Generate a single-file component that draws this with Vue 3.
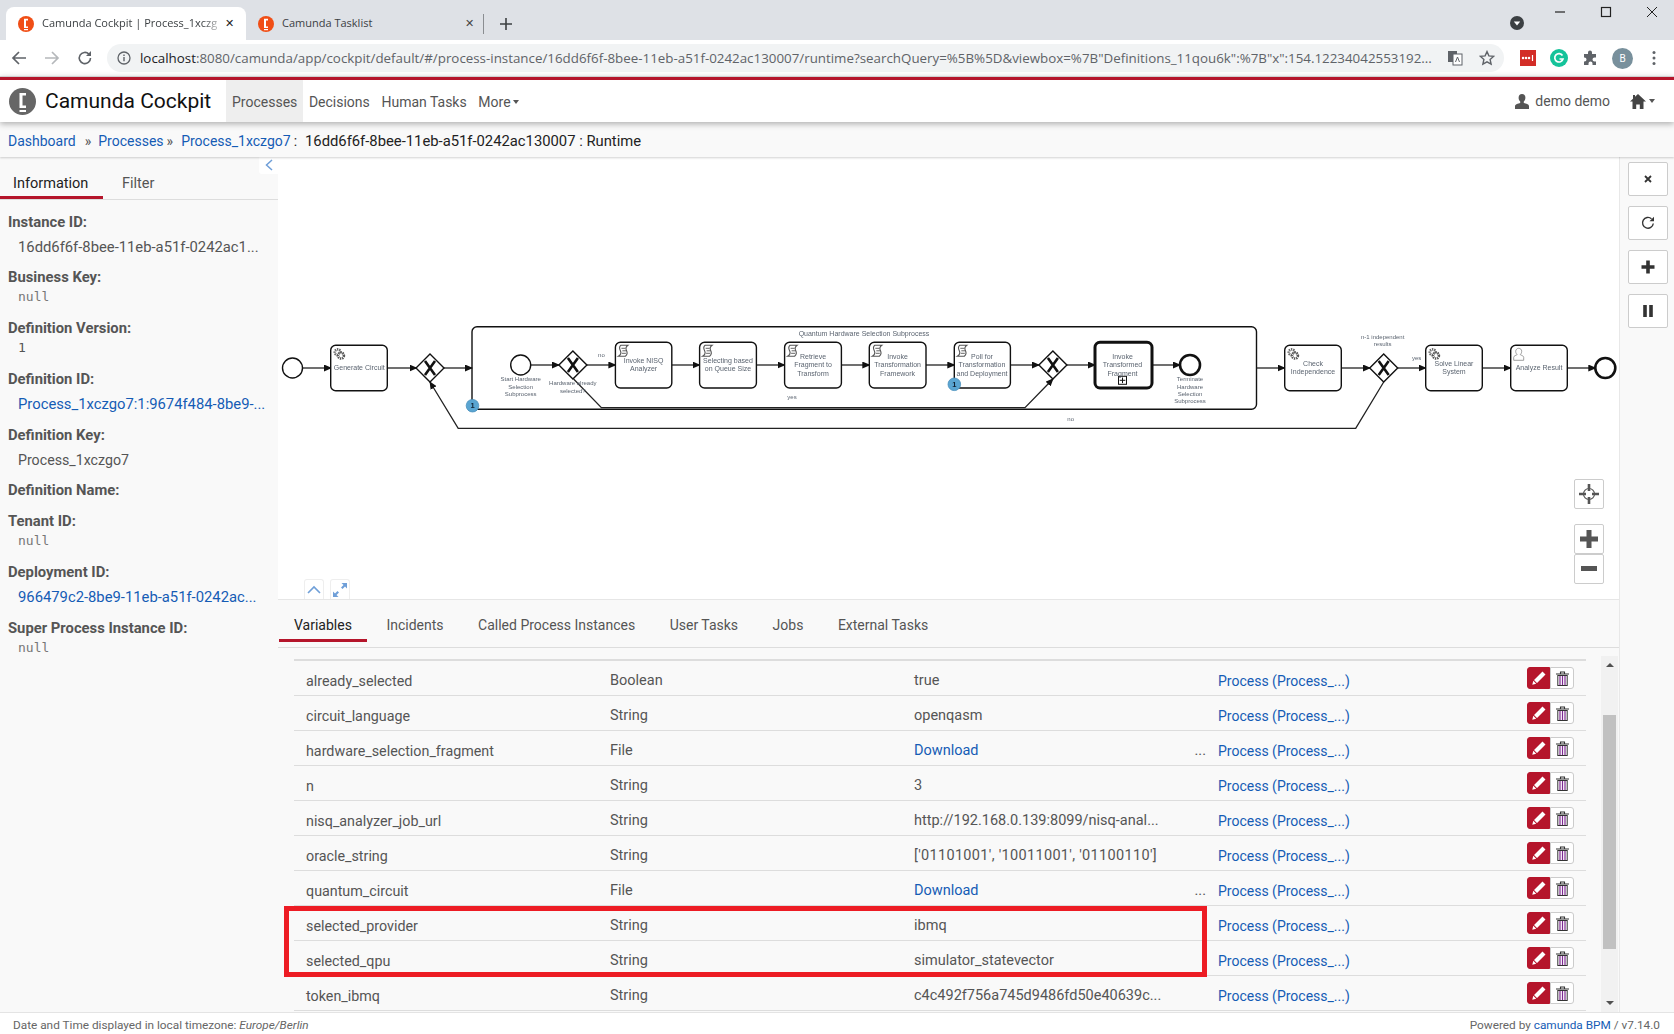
<template>
  <div class="page">
    <!-- browser chrome -->
    <div class="tabstrip">
      <div class="tab tab-active">
        <svg class="favicon" width="16" height="16" viewBox="0 0 16 16"><circle cx="8" cy="8" r="8" fill="#f04e16"/><path d="M6 2.800h4v1.600H8v6h2V12H6z" fill="#fff"/><rect x="6" y="13" width="4" height="1.200" fill="#fff"/></svg>
        <span class="tab-title fade">Camunda Cockpit | Process_1xczg</span>
        <span class="tab-close">✕</span>
      </div>
      <div class="tab">
        <svg class="favicon" width="16" height="16" viewBox="0 0 16 16"><circle cx="8" cy="8" r="8" fill="#f04e16"/><path d="M6 2.800h4v1.600H8v6h2V12H6z" fill="#fff"/><rect x="6" y="13" width="4" height="1.200" fill="#fff"/></svg>
        <span class="tab-title">Camunda Tasklist</span>
        <span class="tab-close dim">✕</span>
      </div>
      <span class="tab-sep"></span>
      <svg class="new-tab" width="12" height="12" viewBox="0 0 12 12"><path d="M6 0v12M0 6h12" stroke="#3c4043" stroke-width="1.6"/></svg>
      <span class="spacer"></span>
      <svg class="tab-search" width="14" height="14" viewBox="0 0 14 14"><circle cx="7" cy="7" r="7" fill="#3c4043"/><path d="M3.800 5.400h6.400L7 9.600z" fill="#fff"/></svg>
      <div class="win-controls">
        <svg width="12" height="12" viewBox="0 0 12 12"><path d="M1 6h10" stroke="#222" stroke-width="1.2"/></svg>
        <svg width="12" height="12" viewBox="0 0 12 12"><rect x="1.500" y="1.500" width="9" height="9" fill="none" stroke="#222" stroke-width="1.2"/></svg>
        <svg width="12" height="12" viewBox="0 0 12 12"><path d="M1 1l10 10M11 1L1 11" stroke="#222"/></svg>
      </div>
    </div>
    <div class="toolbar">
      <svg width="16" height="16" viewBox="0 0 16 16"><path d="M15 8H2M8 2L2 8l6 6" fill="none" stroke="#5f6368" stroke-width="1.7"/></svg>
      <svg width="16" height="16" viewBox="0 0 16 16"><path d="M1 8h13M8 2l6 6-6 6" fill="none" stroke="#b5b8bb" stroke-width="1.7"/></svg>
      <svg width="16" height="16" viewBox="0 0 16 16"><path d="M13.500 8a5.600 5.600 0 1 1-1.600-3.900" fill="none" stroke="#5f6368" stroke-width="1.6"/><path d="M14 1v5H9z" fill="#5f6368"/></svg>
      <div class="omnibox">
        <svg width="14" height="14" viewBox="0 0 14 14"><circle cx="7" cy="7" r="6" fill="none" stroke="#5f6368" stroke-width="1.3"/><path d="M7 6v4.200M7 3.400v1.500" stroke="#5f6368" stroke-width="1.4"/></svg>
        <span class="url"><b>localhost</b>:8080/camunda/app/cockpit/default/#/process-instance/16dd6f6f-8bee-11eb-a51f-0242ac130007/runtime?searchQuery=%5B%5D&amp;viewbox=%7B"Definitions_11qou6k":%7B"x":154.12234042553192...</span>
        <svg width="16" height="16" viewBox="0 0 16 16"><rect x="1" y="1" width="9" height="11" fill="#5f6368"/><rect x="6" y="4" width="9" height="11" fill="#fff" stroke="#5f6368"/><path d="M8.500 12l2-5 2 5" fill="none" stroke="#5f6368"/></svg>
        <svg class="star" width="16" height="16" viewBox="0 0 16 16"><path d="M8 1.600l1.900 4.300 4.700.5-3.500 3.100 1 4.600L8 11.800 3.900 14.100l1-4.600L1.400 6.400l4.700-.5z" fill="none" stroke="#5f6368" stroke-width="1.4"/></svg>
      </div>
      <div class="extensions">
        <svg width="16" height="16" viewBox="0 0 16 16"><rect width="16" height="16" fill="#d32d27"/><path d="M3 8h.1M6 8h.1M9 8h.1" stroke="#fff" stroke-width="2.4" stroke-linecap="round"/><path d="M12.500 5v6" stroke="#fff" stroke-width="1.2"/></svg>
        <svg width="18" height="18" viewBox="0 0 18 18"><circle cx="9" cy="9" r="9" fill="#15c39a"/><path d="M12.500 6.500A4.200 4.200 0 1 0 13 10H9.500" fill="none" stroke="#fff" stroke-width="1.7"/></svg>
        <svg width="16" height="16" viewBox="0 0 16 16"><path d="M6 2.500a2 2 0 0 1 4 0V4h4v3.500h-1.500a2 2 0 0 0 0 4H14V15h-3.500v-1.500a2 2 0 0 0-4 0V15H2v-3.500H2.500a2 2 0 0 0 0-4H2V4h4z" fill="#5f6368"/></svg>
        <span class="avatar">B</span>
        <svg width="4" height="16" viewBox="0 0 4 16"><circle cx="2" cy="2.500" r="1.500" fill="#5f6368"/><circle cx="2" cy="8" r="1.500" fill="#5f6368"/><circle cx="2" cy="13.500" r="1.500" fill="#5f6368"/></svg>
      </div>
    </div>

    <!-- camunda header -->
    <header class="navbar">
      <svg class="logo" width="27" height="27" viewBox="0 0 27 27"><circle cx="13.500" cy="13.500" r="13.500" fill="#666"/><path d="M10.500 5h6.500v2.500h-3.500v10H17V20h-6.500z" fill="#fff"/><rect x="10.500" y="22" width="6.500" height="2" fill="#fff"/></svg>
      <span class="brand">Camunda Cockpit</span>
      <nav class="nav">
        <a class="nav-item active">Processes</a>
        <a class="nav-item">Decisions</a>
        <a class="nav-item">Human Tasks</a>
        <a class="nav-item">More<i class="caret"></i></a>
      </nav>
      <span class="spacer"></span>
      <svg width="14" height="15" viewBox="0 0 14 15"><path d="M7 0c2.200 0 3.400 1.700 3.400 3.800 0 1.600-.7 3-1.600 3.800v1.300c2 .6 5.200 1.200 5.200 3.100v3H0v-3c0-1.900 3.200-2.500 5.200-3.100V7.600C4.300 6.800 3.600 5.400 3.600 3.800 3.600 1.700 4.800 0 7 0z" fill="#555"/></svg>
      <span class="user">demo demo</span>
      <svg class="home" width="16" height="15" viewBox="0 0 16 15"><path d="M8 0l8 7.500h-2.500V15H9.800v-4.500H6.200V15H2.500V7.500H0L3 4.700V1h2v1.800z" fill="#444"/></svg>
      <i class="caret home-caret"></i>
    </header>

    <div class="breadcrumb">
      <a>Dashboard</a><span class="sep">»</span><a>Processes</a><span class="sep2">»</span><a>Process_1xczgo7</a><span class="colon">:</span><span class="crumb-id">16dd6f6f-8bee-11eb-a51f-0242ac130007 : Runtime</span>
    </div>

    <div class="body">
      <aside class="sidebar">
        <button class="collapse-side">
          <svg width="10" height="12" viewBox="0 0 10 12"><path d="M8 1L2.500 6 8 11" fill="none" stroke="#6f9fd8" stroke-width="1.5"/></svg>
        </button>
        <div class="side-tabs">
          <span class="side-tab current">Information</span>
          <span class="side-tab">Filter</span>
        </div>
        <dl class="info">
          <div v-for="item in info" :key="item.label" class="info-item">
            <dt>{{ item.label }}</dt>
            <dd v-if="item.kind" :class="item.kind">{{ item.value }}</dd>
          </div>
        </dl>
      </aside>

      <main class="main">
        <section class="diagram">
          <svg class="bpmn" width="1341" height="443" viewBox="278 157 1341 443">
            <defs>
              <marker id="arr" markerWidth="8" markerHeight="7" refX="7" refY="3.5" orient="auto" markerUnits="userSpaceOnUse">
                <path d="M0 0l8 3.500L0 7z" fill="#111"/>
              </marker>
              <g id="gear">
                <circle cx="4.500" cy="4.500" r="2.900" fill="#fff" stroke="#666" stroke-width="2.600" stroke-dasharray="1.300 .8"/>
                <circle cx="7.800" cy="7.800" r="2.900" fill="#fff" stroke="#555" stroke-width="2.600" stroke-dasharray="1.300 .8"/>
              </g>
              <g id="script">
                <path d="M3 .5h7C8 2 7.500 3.500 8.500 5.500S10 9.500 7.500 11.500h-7C3 10 3.500 8 2.500 6S1 2 3 .5z" fill="#fff" stroke="#555" stroke-width="1.1"/>
                <path d="M3.500 3.500h4M4.500 6h4M4 8.500h4" stroke="#555" stroke-width=".9"/>
              </g>
              <g id="person">
                <path d="M.5 12.500V9.500c0-1.500 2.500-2 3.500-2.700-1-.8-1.500-2-1.500-3.300C2.500 1.800 3.800.5 5.500.5s3 1.300 3 3c0 1.300-.5 2.500-1.500 3.300 1 .7 3.500 1.200 3.500 2.700v3z" fill="#fff" stroke="#888" stroke-width=".8"/>
              </g>
            </defs>
            <!-- subprocess -->
            <rect x="472" y="326.7" width="784.5" height="82.6" rx="5" class="shape"/>
            <!-- sequence flows -->
            <path v-for="f in flows" :key="f" :d="f" class="flow" marker-end="url(#arr)"/>
            <path d="M1383.700 382L1355.700 428.300H458.200L430 382" class="flow" marker-end="url(#arr)"/>
            <path d="M573.600 379L601.400 407.700H1025L1052.900 379" class="flow" marker-end="url(#arr)"/>
            <!-- events -->
            <circle cx="292.5" cy="368" r="10" class="shape"/>
            <circle cx="520.7" cy="365" r="10" class="shape"/>
            <circle cx="1190" cy="365" r="10" class="shape end"/>
            <circle cx="1605.3" cy="368" r="10" class="shape end"/>
            <!-- gateways -->
            <g v-for="g in gateways" :key="g[0]" :transform="`translate(${g[0]} ${g[1]})`">
              <path d="M0-14L14 0 0 14-14 0z" class="shape"/>
              <path d="M-5-7L5 7M5-7L-5 7" stroke="#111" stroke-width="2.600"/>
            </g>
            <!-- tasks -->
            <g v-for="t in tasks" :key="t.x">
              <rect :x="t.x" :y="t.y" :width="t.w" :height="t.h" rx="5" :class="['shape', { thick: t.thick }]"/>
              <use v-if="t.icon" :href="`#${t.icon}`" :x="t.x + 2.5" :y="t.y + 2.5"/>
            </g>
            <rect x="1118.5" y="376.3" width="8" height="8" fill="#fff" stroke="#111"/>
            <path d="M1122.500 377.500v5.600M1119.700 380.300h5.600" stroke="#111"/>
            <!-- multi instance badges -->
            <g v-for="b in badges" :key="b[0]">
              <circle :cx="b[0]" :cy="b[1]" r="6.3" fill="#5aa5d2" stroke="#4a90bd" stroke-width=".8"/>
              <text :x="b[0]" :y="b[1] + 2.5" class="badge">1</text>
            </g>
            <!-- labels -->
            <text v-for="l in labels" :key="l.t + l.x + l.y" :x="l.x" :y="l.y" :class="['lbl', { small: l.s }]">{{ l.t }}</text>
          </svg>

          <div class="map-controls">
            <button class="map-btn">
              <svg width="20" height="20" viewBox="0 0 20 20"><circle cx="10" cy="10" r="5.500" fill="none" stroke="#555" stroke-width="1.2"/><path d="M10 0v7M10 13v7M0 10h7M13 10h7" stroke="#555" stroke-width="2.6"/></svg>
            </button>
            <div class="zoom-group">
              <button class="map-btn">
                <svg width="18" height="18" viewBox="0 0 18 18"><path d="M9 0v18M0 9h18" stroke="#555" stroke-width="5"/></svg>
              </button>
              <button class="map-btn">
                <svg width="16" height="6" viewBox="0 0 16 6"><rect width="16" height="5" fill="#555"/></svg>
              </button>
            </div>
          </div>

          <div class="pane-controls">
            <button class="pane-btn">
              <svg width="14" height="9" viewBox="0 0 14 9"><path d="M1 8l6-6 6 6" fill="none" stroke="#6f9fd8" stroke-width="1.6"/></svg>
            </button>
            <button class="pane-btn">
              <svg width="14" height="14" viewBox="0 0 14 14"><path d="M14 0H8.500l2 2L8 4.500 9.500 6 12 3.500l2 2zM0 14h5.500l-2-2L6 9.500 4.500 8 2 10.500l-2-2z" fill="#6f9fd8"/></svg>
            </button>
          </div>
        </section>

        <div class="tabs">
          <span v-for="(t, i) in tabs" :key="t" :class="['tab-link', { current: i === 0 }]">{{ t }}</span>
        </div>

        <div class="table-area">
          <div class="table">
            <div v-for="row in rows" :key="row.name" class="row">
              <span class="c-name">{{ row.name }}</span>
              <span>{{ row.type }}</span>
              <span :class="['c-value', { spread: row.spread }]">
                <a v-if="row.download" class="link">Download</a>
                <template v-else>{{ row.value }}</template>
                <span v-if="row.download" class="dots">...</span>
              </span>
              <a class="link c-scope">Process (Process_...)</a>
              <span class="actions">
                <button class="act edit">
                  <svg width="14" height="14" viewBox="0 0 14 14"><path d="M10.500 .5l3 3-8.500 8.500-3-3zM1.300 9.800l2.900 2.900-3.900 1z" fill="#fff"/></svg>
                </button>
                <button class="act trash">
                  <svg width="13" height="15" viewBox="0 0 13 15"><path d="M0 3h13M4.500 3V1h4v2" fill="none" stroke="#333" stroke-width="1.1"/><rect x="1.800" y="4.500" width="9.400" height="10" fill="#fff" stroke="#333"/><path d="M4 5v9M6.500 5v9M9 5v9" stroke="#7d2a91" stroke-width="1.2"/></svg>
                </button>
              </span>
            </div>
            <div class="highlight"></div>
          </div>
          <div class="scrollbar">
            <i class="arrow up"></i>
            <span class="track-a"></span>
            <span class="thumb"></span>
            <span class="track-b"></span>
            <i class="arrow down"></i>
          </div>
        </div>
      </main>

      <div class="rail">
        <button class="rail-btn">
          <svg width="8" height="8" viewBox="0 0 8 8"><path d="M1 1l6 6M7 1L1 7" stroke="#333" stroke-width="1.8"/></svg>
        </button>
        <button class="rail-btn">
          <svg width="14" height="14" viewBox="0 0 14 14"><path d="M12.300 7.500A5.400 5.400 0 1 1 10.500 2.700" fill="none" stroke="#333" stroke-width="1.4"/><path d="M13 .8v4.500H8.500z" fill="#333"/></svg>
        </button>
        <button class="rail-btn">
          <svg width="14" height="14" viewBox="0 0 14 14"><path d="M7 .5v13M.5 7h13" stroke="#333" stroke-width="3.6"/></svg>
        </button>
        <button class="rail-btn">
          <svg width="10" height="12" viewBox="0 0 10 12"><path d="M2 0v12M8 0v12" stroke="#333" stroke-width="3.6"/></svg>
        </button>
      </div>
    </div>

    <footer class="footer">
      <span>Date and Time displayed in local timezone: <em>Europe/Berlin</em></span>
      <span>Powered by <a class="link">camunda BPM</a> / v7.14.0</span>
    </footer>
  </div>
</template>

<script setup>
const info = [
  { label: 'Instance ID:', value: '16dd6f6f-8bee-11eb-a51f-0242ac1...', kind: 'text' },
  { label: 'Business Key:', value: 'null', kind: 'mono' },
  { label: 'Definition Version:', value: '1', kind: 'mono dark' },
  { label: 'Definition ID:', value: 'Process_1xczgo7:1:9674f484-8be9-...', kind: 'text blue' },
  { label: 'Definition Key:', value: 'Process_1xczgo7', kind: 'text plain' },
  { label: 'Definition Name:' },
  { label: 'Tenant ID:', value: 'null', kind: 'mono' },
  { label: 'Deployment ID:', value: '966479c2-8be9-11eb-a51f-0242ac...', kind: 'text blue' },
  { label: 'Super Process Instance ID:', value: 'null', kind: 'mono' }
]

const tabs = ['Variables', 'Incidents', 'Called Process Instances', 'User Tasks', 'Jobs', 'External Tasks']

const rows = [
  { name: 'already_selected', type: 'Boolean', value: 'true' },
  { name: 'circuit_language', type: 'String', value: 'openqasm' },
  { name: 'hardware_selection_fragment', type: 'File', download: true },
  { name: 'n', type: 'String', value: '3' },
  { name: 'nisq_analyzer_job_url', type: 'String', value: 'http://192.168.0.139:8099/nisq-anal...' },
  { name: 'oracle_string', type: 'String', value: "['01101001', '10011001', '01100110']", spread: true },
  { name: 'quantum_circuit', type: 'File', download: true },
  { name: 'selected_provider', type: 'String', value: 'ibmq' },
  { name: 'selected_qpu', type: 'String', value: 'simulator_statevector' },
  { name: 'token_ibmq', type: 'String', value: 'c4c492f756a745d9486fd50e40639c...' }
]

const hop = (x1, x2, y) => `M${x1} ${y}H${x2}`
const flows = [
  hop(302.5, 331, 368), hop(387, 416.5, 368), hop(444, 472, 368),
  hop(531, 559, 365), hop(587, 615.4, 365), hop(672, 699.6, 365), hop(756.4, 784.6, 365),
  hop(841.4, 869.3, 365), hop(926, 954.3, 365), hop(1010.4, 1039, 365), hop(1067, 1095, 365), hop(1152, 1180, 365),
  hop(1256.5, 1284.7, 368), hop(1341.3, 1370, 368), hop(1398, 1425.7, 368), hop(1482.3, 1510.7, 368), hop(1567.3, 1595.3, 368)
]

const gateways = [[430, 368], [572.9, 365], [1052.9, 365], [1383.7, 368]]

const tasks = [
  { x: 330.7, y: 345.3, w: 56.6, h: 45.4, icon: 'gear' },
  { x: 615.4, y: 342.3, w: 56.4, h: 45.7, icon: 'script' },
  { x: 699.6, y: 342.3, w: 56.8, h: 45.7, icon: 'script' },
  { x: 784.6, y: 342.3, w: 56.8, h: 45.7, icon: 'script' },
  { x: 869.3, y: 342.3, w: 56.7, h: 45.7, icon: 'script' },
  { x: 954.3, y: 342.3, w: 56.1, h: 45.7, icon: 'script' },
  { x: 1095, y: 342.3, w: 57, h: 45.7, thick: true },
  { x: 1284.7, y: 345.3, w: 56.6, h: 45.4, icon: 'gear' },
  { x: 1425.7, y: 345.3, w: 56.6, h: 45.4, icon: 'gear' },
  { x: 1510.7, y: 345.3, w: 56.6, h: 45.4, icon: 'person' }
]

const badges = [[472.5, 405.7], [954.3, 384.3]]

const stack = (x, ys, lines, s) => lines.map((t, i) => ({ t, x, y: ys[i] + 2.4, s }))
const labels = [
  ...stack(359.3, [367.3], ['Generate Circuit']),
  ...stack(520.7, [378.7, 387, 394], ['Start Hardware', 'Selection', 'Subprocess'], true),
  ...stack(572.8, [383, 391], ['Hardware already', 'selected?'], true),
  ...stack(601.4, [355], ['no'], true),
  ...stack(643.6, [360.7, 368.7], ['Invoke NISQ', 'Analyzer']),
  ...stack(728, [360.7, 368.7], ['Selecting based', 'on Queue Size']),
  ...stack(813, [356.7, 364.7, 373.3], ['Retrieve', 'Fragment to', 'Transform']),
  ...stack(792, [397], ['yes'], true),
  ...stack(864, [333.3], ['Quantum Hardware Selection Subprocess']),
  ...stack(897.6, [356.7, 364.7, 373.3], ['Invoke', 'Transformation', 'Framework']),
  ...stack(982, [356.7, 364.7, 373.3], ['Poll for', 'Transformation', 'and Deployment']),
  ...stack(1122.5, [356.7, 364.7, 373.3], ['Invoke', 'Transformed', 'Fragment']),
  ...stack(1190, [379, 387, 394, 401], ['Terminate', 'Hardware', 'Selection', 'Subprocess'], true),
  ...stack(1070.7, [419], ['no'], true),
  ...stack(1313, [363.3, 371.7], ['Check', 'Independence']),
  ...stack(1382.7, [337, 344], ['n-1 independent', 'results'], true),
  ...stack(1416.7, [358], ['yes'], true),
  ...stack(1454, [363.3, 371.7], ['Solve Linear', 'System']),
  ...stack(1539, [367.3], ['Analyze Result'])
]
</script>

<style>
html, body { margin: 0; background: #fff; }
</style>

<style scoped>
.page {
  width: 1674px;
  height: 1034px;
  display: flex;
  flex-direction: column;
  overflow: hidden;
  font-family: Roboto, "Liberation Sans", sans-serif;
  font-size: 14px;
  color: #555;
  background: #f9f9f9;
}
.spacer { flex: 1; }
button { padding: 0; font: inherit; cursor: pointer; }

/* chrome */
.tabstrip {
  height: 40px;
  flex: none;
  display: flex;
  align-items: flex-end;
  background: #dee1e6;
  padding-left: 6px;
  font-family: "Open Sans", sans-serif;
  font-size: 11px;
  color: #3c4043;
}
.tab {
  width: 240px;
  height: 33px;
  box-sizing: border-box;
  display: flex;
  align-items: center;
  padding: 0 9px 0 12px;
  border-radius: 8px 8px 0 0;
}
.tab-active { background: #fff; }
.favicon { flex: none; margin-right: 8px; }
.tab-title { flex: 1; white-space: nowrap; overflow: hidden; padding-bottom: 2px; }
.tab-title.fade { -webkit-mask-image: linear-gradient(to right, #000 88%, transparent 100%); mask-image: linear-gradient(to right, #000 88%, transparent 100%); }
.tab-close { flex: none; width: 12px; font-size: 11px; color: #222; padding-bottom: 2px; }
.tab-close.dim { color: #444; }
.tab-sep { width: 1px; height: 20px; background: #8a8d91; margin: 0 0 6px -3px; }
.new-tab { margin: 0 0 10px 16px; }
.tab-search { margin: 0 30px 10px 0; }
.win-controls { display: flex; gap: 34px; align-self: flex-start; margin: 6px 16px 0 0; }

.toolbar {
  height: 36px;
  flex: none;
  display: flex;
  align-items: center;
  gap: 17px;
  padding-left: 11px;
  background: #fff;
}
.omnibox {
  width: 1397px;
  height: 28px;
  box-sizing: border-box;
  margin-left: -3px;
  display: flex;
  align-items: center;
  padding: 0 9px 0 10px;
  border-radius: 14px;
  background: #f1f3f4;
}
.url {
  flex: 1;
  margin-left: 9px;
  white-space: nowrap;
  overflow: hidden;
  font-family: "Open Sans", sans-serif;
  font-size: 13.35px;
  color: #5f6368;
}
.url b { font-weight: 400; color: #202124; }
.star { margin-left: 16px; }
.extensions { display: flex; align-items: center; gap: 14px; margin-left: -1px; }
.avatar {
  width: 21px;
  height: 21px;
  border-radius: 50%;
  background: #78909c;
  color: #fff;
  font-size: 10px;
  display: flex;
  align-items: center;
  justify-content: center;
  margin-right: 5px;
}

/* header */
.navbar {
  height: 42px;
  flex: none;
  display: flex;
  align-items: center;
  padding: 3px 19px 0 9px;
  background: #fff;
  border-top: 1px solid #d0d0d0;
  box-shadow: inset 0 3px 0 #b5152b, 0 2px 6px rgba(0, 0, 0, .3);
  position: relative;
  z-index: 3;
}
.logo { flex: none; }
.brand { margin-left: 9px; width: 181px; font-size: 21px; color: #111; white-space: nowrap; }
.nav { display: flex; height: 42px; }
.nav-item { display: flex; align-items: center; padding: 1px 6px 0; margin-right: -.4px; }
.nav-item.active { background: #eee; }
.caret {
  display: inline-block;
  margin-left: 2px;
  border-left: 3.5px solid transparent;
  border-right: 3.5px solid transparent;
  border-top: 4px solid #555;
}
.user { margin-left: 6px; }
.home { margin-left: 20px; }
.home-caret { margin-left: 3px; }

.breadcrumb {
  height: 35px;
  flex: none;
  box-sizing: border-box;
  display: flex;
  align-items: center;
  padding: 3px 0 0 8px;
  background: #f9f9f9;
  color: #222;
  box-shadow: 0 1px 2px rgba(0, 0, 0, .18);
  position: relative;
  z-index: 2;
}
.breadcrumb a { color: #155cb5; }
.sep { margin: 0 7px 0 9px; color: #555; }
.sep2 { margin: 0 8px 0 3px; color: #555; }
.colon { margin: 0 8px 0 3px; }
.crumb-id { font-size: 14.8px; }

.body { flex: 1; min-height: 0; display: flex; }

/* sidebar */
.sidebar { width: 278px; flex: none; box-sizing: border-box; position: relative; background: #f9f9f9; }
.collapse-side {
  position: absolute;
  right: 0;
  top: 0;
  width: 19px;
  height: 17px;
  border: none;
  background: #fff;
  border-radius: 0 0 0 3px;
}
.side-tabs { height: 42px; display: flex; align-items: flex-end; border-bottom: 1px solid #ddd; font-size: 14.5px; }
.side-tab { height: 28px; display: block; padding: 0 13px; margin-right: 6px; color: #555; line-height: 25px; box-sizing: border-box; }
.side-tab.current { color: #222; border-bottom: 3px solid #b5152b; width: 103px; }
.info { margin: 0; padding: 11.5px 8px 0; display: flex; flex-direction: column; gap: 10.8px; font-size: 14.8px; }
.info-item { min-height: 20px; }
dt { font-weight: 700; line-height: 20px; color: #555; }
dd { margin: 0; line-height: 20px; white-space: nowrap; }
dd.text { margin: 5px 0 0 10px; }
dd.plain { font-size: 14.2px; }
dd.mono { margin-left: 10px; font-family: "DejaVu Sans Mono", monospace; font-size: 13px; color: #777; }
dd.dark { color: #555; }
dd.blue { color: #155cb5; }

/* diagram */
.main { flex: 1; min-width: 0; display: flex; flex-direction: column; }
.diagram { height: 443px; flex: none; position: relative; background: #fff; border-bottom: 1px solid #e6e6e6; box-sizing: border-box; }
.bpmn { display: block; filter: blur(.3px); }
.shape { fill: #fff; stroke: #111; stroke-width: 1.4; }
.shape.end { stroke-width: 2.6; }
.shape.thick { stroke-width: 3; }
.flow { fill: none; stroke: #222; stroke-width: 1.3; }
.lbl {
  font-family: "Liberation Sans", sans-serif;
  font-size: 7px;
  text-anchor: middle;
  fill: #5b6470;
}
.lbl.small { font-size: 6px; }
.badge { font-family: "Liberation Sans", sans-serif; font-size: 7.5px; font-weight: 700; text-anchor: middle; fill: #123; }
.map-controls { position: absolute; left: 1296px; top: 322px; display: flex; flex-direction: column; gap: 15px; }
.zoom-group { display: flex; flex-direction: column; }
.map-btn {
  width: 30px;
  height: 30px;
  display: flex;
  align-items: center;
  justify-content: center;
  background: #fff;
  border: 1px solid #ccc;
  border-radius: 2px;
}
.pane-controls { position: absolute; left: 26px; bottom: 0; display: flex; gap: 6px; }
.pane-btn {
  width: 20px;
  height: 20px;
  display: flex;
  align-items: center;
  justify-content: center;
  background: #fff;
  border: 1px solid #eee;
  border-bottom: none;
  border-radius: 3px 3px 0 0;
}

/* detail tabs */
.tabs { height: 48px; flex: none; box-sizing: border-box; display: flex; align-items: flex-end; padding-left: 1px; border-bottom: 1px solid #ddd; }
.tab-link { height: 42px; padding: 14px 15px 0; margin-right: 4.5px; margin-bottom: 5px; line-height: 22px; box-sizing: border-box; white-space: nowrap; }
.tab-link.current { color: #222; border-bottom: 3px solid #b5152b; }

/* variables table */
.table-area { flex: 1; min-height: 0; display: flex; align-items: flex-start; padding: 11px 0 0 16px; }
.table { width: 1292px; position: relative; border-top: 2px solid #ddd; font-size: 14.5px; }
.row {
  height: 35px;
  box-sizing: border-box;
  display: grid;
  grid-template-columns: 304px 304px 304px 1fr 59px;
  align-items: center;
  padding: 5px 0 0 12px;
  border-bottom: 1px solid #ddd;
  white-space: nowrap;
}
.c-name { font-size: 14.3px; }
.c-value { display: flex; justify-content: space-between; padding-right: 12px; }
.c-value.spread { letter-spacing: .32px; }
.c-scope { font-size: 14px; }
.dots { color: #555; }
.link { color: #155cb5; }
.actions { display: flex; align-self: start; margin-top: 1px; }
.act {
  width: 24px;
  height: 22px;
  display: flex;
  align-items: center;
  justify-content: center;
  border: 1px solid #ccc;
  background: #fff;
  border-radius: 0 3px 3px 0;
}
.act.edit { width: 23px; background: #b5152b; border-color: #b5152b; border-radius: 3px 0 0 3px; }
.highlight {
  position: absolute;
  left: -10px;
  top: 245px;
  width: 913px;
  height: 61px;
  border: 5px solid #ed1c24;
}
.scrollbar {
  width: 17px;
  height: 356px;
  margin: -3px 0 0 15px;
  display: flex;
  flex-direction: column;
  align-items: center;
  background: #f1f1f1;
}
.arrow { width: 0; height: 0; border-left: 4px solid transparent; border-right: 4px solid transparent; flex: none; }
.arrow.up { border-bottom: 4px solid #505050; margin: 7px 0; }
.arrow.down { border-top: 4px solid #505050; margin: 7px 0; }
.track-a { height: 41px; flex: none; }
.thumb { width: 13px; height: 234px; background: #c1c1c1; flex: none; }
.track-b { flex: 1; }

/* right rail */
.rail {
  width: 55px;
  flex: none;
  box-sizing: border-box;
  display: flex;
  flex-direction: column;
  gap: 10px;
  padding: 5px 0 0 8px;
  background: #f9f9f9;
  border-left: 1px solid #e8e8e8;
}
.rail-btn {
  width: 40px;
  height: 34px;
  display: flex;
  align-items: center;
  justify-content: center;
  background: #fff;
  border: 1px solid #ccc;
  border-radius: 2px;
}

.footer {
  height: 22px;
  flex: none;
  box-sizing: border-box;
  display: flex;
  justify-content: space-between;
  align-items: center;
  padding: 2px 14px 0 13px;
  background: #fff;
  border-top: 1px solid #e4e4e4;
  font-size: 11.8px;
  color: #666;
}
</style>
